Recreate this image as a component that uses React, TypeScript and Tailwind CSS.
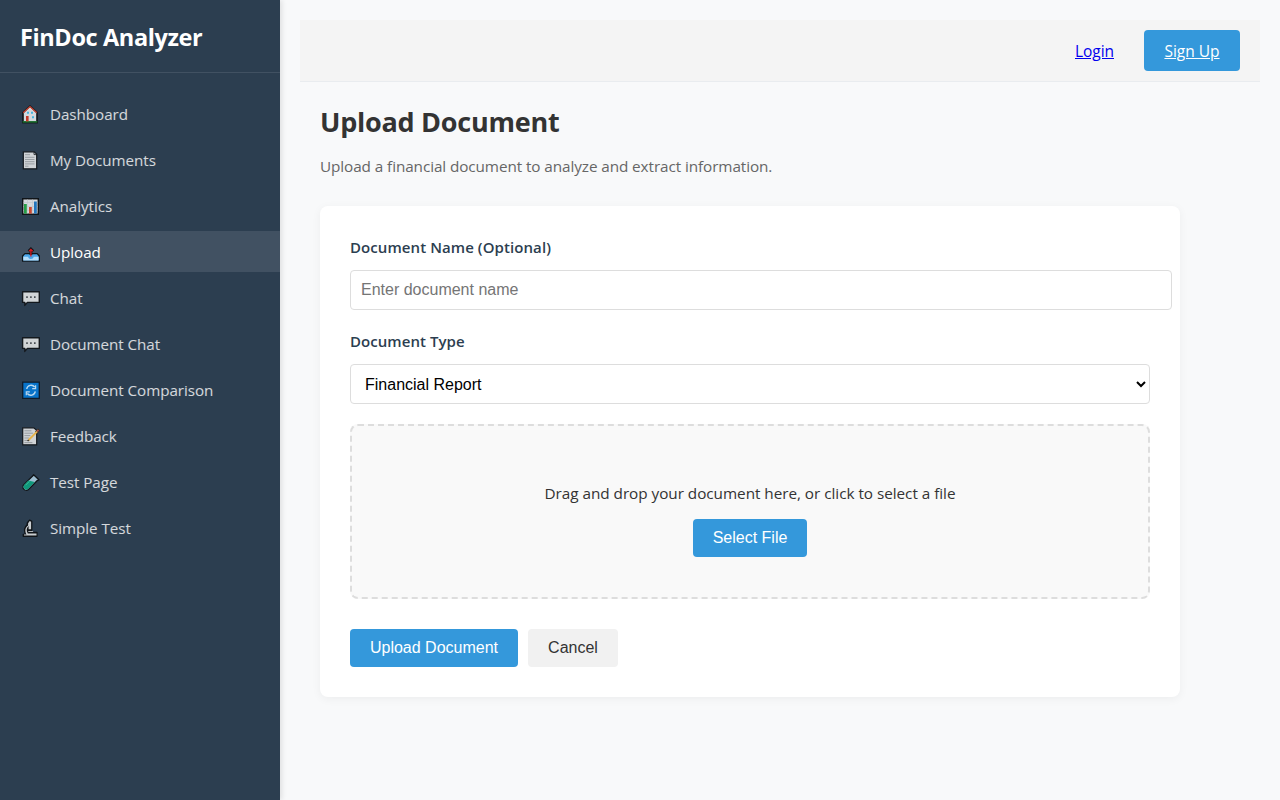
import type { ReactNode } from "react";

const icons: Record<string, ReactNode> = {
  home: (
    <>
      <path d="M10 3 17 9.6V19.5H3V9.6Z" fill="#d5d9dd" stroke="#101418" strokeWidth="1.6" />
      <path d="M3.2 9.8 10 3.6l6.8 6.2" fill="none" stroke="#c8402e" strokeWidth="1.2" />
      <path d="M2 19.2h16" stroke="#101418" strokeWidth="2" />
      <path d="M2.6 18.9h14.8" stroke="#239b3b" strokeWidth="1.1" />
      <path d="M7 8.7h2v2H7zm4 0h2v2h-2zm1 4.6h2v2h-2z" fill="#45b5de" />
      <path d="M6 13h2.6v5.4H6z" fill="#c43a2b" />
    </>
  ),
  page: (
    <>
      <path d="M3.3 2.8h11l2.4 2.4v14.6H3.3Z" fill="#d0d3d6" stroke="#13181d" strokeWidth="1.2" />
      <path d="M14 3v2.6h2.6" fill="none" stroke="#13181d" strokeWidth=".8" />
      <path d="M5 5.7h5M5 8.3h9.5M5 10.5h9.5M5 12.7h9.5M5 14.9h9.5M5 17.2h3.5" stroke="#92979c" strokeWidth=".9" />
    </>
  ),
  chart: (
    <>
      <path d="M2.7 3.7h15.6v15.6H2.7z" fill="#d6d9dd" stroke="#101418" strokeWidth="1.4" />
      <path d="M3.4 7.5h14M3.4 11.5h14M3.4 15.5h14M7.5 4.4v14M12.5 4.4v14" stroke="#bfc5ca" strokeWidth=".6" />
      <path d="M4 9h2.8v9.6H4z" fill="#269d46" />
      <path d="M9 12h2.8v6.6H9z" fill="#ca4932" />
      <path d="M14 6.5h2.8v12.1H14z" fill="#2375bc" />
    </>
  ),
  upload: (
    <>
      <path d="M4.8 12.6h12.4l2.1 2.4v5.2H2.6V15Z" fill="#4aa5e9" stroke="#101418" strokeWidth="1.3" strokeLinejoin="round" />
      <path d="M3.3 15.8h4.8c.3 1.5 1.3 2.2 2.8 2.2s2.5-.7 2.8-2.2h4.9v3.8H3.3Z" fill="#b4dcf8" />
      <path d="M10.9 14V8.6M8.6 10.2l2.3-2.3 2.3 2.3" fill="none" stroke="#101418" strokeWidth="2.8" />
      <path d="M10.9 15.6V8.6M9.1 10.2l1.8-1.8 1.8 1.8" fill="none" stroke="#d91920" strokeWidth="1.3" />
    </>
  ),
  chat: (
    <>
      <path d="M2.6 4.7h16.7v10.7H7.4l-2.6 3v-3H2.6Z" fill="#d1d4d6" stroke="#13181d" strokeWidth="1.4" strokeLinejoin="round" />
      <path d="M6.2 9.3h1.6v1.6H6.2zm3.9 0h1.6v1.6h-1.6zm3.9 0h1.6v1.6H14z" fill="#464b50" />
    </>
  ),
  refresh: (
    <>
      <path d="M2.7 3.2h16.6v16.1H2.7z" fill="#0873c9" stroke="#101c2a" strokeWidth="1.3" />
      <path d="M6.7 10a4.5 4.5 0 0 1 8-2M15.3 12.4a4.5 4.5 0 0 1-8 2.1" fill="none" stroke="#b9d8ef" strokeWidth="1.4" />
      <path d="M15.6 6.2v3.5h-3.4M6.3 16.3v-3.5h3.5" fill="none" stroke="#b9d8ef" strokeWidth="1.2" />
    </>
  ),
  memo: (
    <>
      <path d="M2.7 2.8h11l3 2.4v14.6h-14Z" fill="#d0d3d6" stroke="#13181d" strokeWidth="1.2" />
      <path d="M4.4 5.8h7M4.4 8.2h8.5M4.4 10.6h6M4.4 13h4.5M4.4 15.4h4M4.4 17.6h8" stroke="#8f9499" strokeWidth=".9" />
      <path d="m16 7.6 3.2-3.1" stroke="#34312a" strokeWidth="3" />
      <path d="m7.6 15.9 1.6-1.5" stroke="#34312a" strokeWidth="1.4" />
      <path d="m8.6 15 8.4-8.4" stroke="#e5b14b" strokeWidth="1.9" />
      <path d="m17.1 6.4 1.3-1.3" stroke="#b9534b" strokeWidth="1.7" />
    </>
  ),
  tube: (
    <>
      <path d="m13.6 3.7 5.3 5.1-1.6.7-8.6 8.8a3.3 3.3 0 0 1-4.9-4.7l9.1-8.8Z" fill="#9dbdd0" stroke="#101418" strokeWidth="1.3" strokeLinejoin="round" />
      <path d="m8.3 9.6 6.4 1.5-6.4 6.6a2.5 2.5 0 0 1-3.9-3.9Z" fill="#10987b" />
      <path d="m5.6 14.2 3.8-3.8" stroke="#39bd97" />
    </>
  ),
  microscope: (
    <>
      <path d="M7.2 5.8 9.7 3l2.1 1.2v8.3l-1 2.8H17v4H3.2v-2h2.2c-1.7-4.2-.6-7.5 1.8-9.5Z" fill="#101418" stroke="#101418" strokeWidth="1.2" strokeLinejoin="round" />
      <path d="M8.1 6.2 9.7 4l1.4.8v7.4H8.6V9c-2 1.8-2.6 4.4-.8 7.5h8.7v2H4v-1h2.5c-2-3.7-1.3-7 1.6-9Z" fill="#c9cdd0" />
      <path d="M8.3 14h4.8v1H8.3z" fill="#aeb4b8" />
    </>
  ),
};

const items = [
  { label: "Dashboard", icon: "home" },
  { label: "My Documents", icon: "page" },
  { label: "Analytics", icon: "chart" },
  { label: "Upload", icon: "upload" },
  { label: "Chat", icon: "chat" },
  { label: "Document Chat", icon: "chat" },
  { label: "Document Comparison", icon: "refresh" },
  { label: "Feedback", icon: "memo" },
  { label: "Test Page", icon: "tube" },
  { label: "Simple Test", icon: "microscope" },
];

function Sidebar() {
  return (
    <aside className="z-10 w-[280px] shrink-0 bg-[#2c3e50] text-white shadow-[2px_0_5px_rgba(0,0,0,0.1)]">
      <div className="h-[73px] border-b border-white/10 px-5 pt-[19px]">
        <h1 className="text-[23.5px] leading-9 font-bold tracking-[-0.38px] whitespace-nowrap">FinDoc Analyzer</h1>
      </div>
      <nav className="flex flex-col gap-[5px] pt-5">
        {items.map((item) => (
          <a
            key={item.label}
            className={
              item.label === "Upload"
                ? "flex h-[41px] items-center bg-white/10 px-5 text-white"
                : "flex h-[41px] items-center px-5 text-white/80"
            }
          >
            <svg viewBox="0 0 20 21" className="mr-2.5 h-[21px] w-5 shrink-0 overflow-visible">
              {icons[item.icon]}
            </svg>
            <span className="pt-0.5 text-[15.2px] font-medium tracking-[-0.05px] whitespace-nowrap">{item.label}</span>
          </a>
        ))}
      </nav>
    </aside>
  );
}

export default function App() {
  return (
    <div className="flex h-screen overflow-hidden bg-[#f8f9fa] font-['Open_Sans','Noto_Sans',sans-serif] text-[#333]">
      <Sidebar />
      <main className="min-w-0 flex-1 p-5">
        <header className="flex h-[62px] items-center justify-end border-b border-[#e9ecef] bg-[#f4f4f4] px-5 text-[15.5px]">
          <a className="mr-[30px] pt-0.5 tracking-[-0.05px] text-[#0000ee] underline">Login</a>
          <a className="flex h-[41px] w-24 items-center justify-center rounded bg-[#3498db] pt-0.5 text-white underline">
            Sign Up
          </a>
        </header>
        <section className="w-[900px] px-5 pt-5">
          <h2 className="text-[27px] leading-10 font-bold tracking-[-0.25px]">Upload Document</h2>
          <p className="mt-3 text-[15.3px] leading-6 tracking-[-0.09px] text-[#666]">
            Upload a financial document to analyze and extract information.
          </p>
          <form className="mt-7 h-[491px] rounded-lg bg-white p-[30px] shadow-[0_2px_10px_rgba(0,0,0,0.05)]">
            <label className="block text-[15px] leading-[22px] font-semibold tracking-[0.08px] text-[#2c3e50]">
              Document Name (Optional)
            </label>
            <input
              placeholder="Enter document name"
              className="mt-3 block h-10 w-[822px] rounded border border-[#ddd] px-2.5 font-['Liberation_Sans',Arial,sans-serif] text-base placeholder:text-[#757575]"
            />
            <label className="mt-5 block text-[15px] leading-[22px] font-semibold tracking-[0.05px] text-[#2c3e50]">
              Document Type
            </label>
            <select className="mt-3 block h-10 w-full rounded border border-[#ddd] bg-white px-2.5 font-['Liberation_Sans',Arial,sans-serif] text-base text-black">
              <option>Financial Report</option>
            </select>
            <div className="mt-5 flex h-[175px] flex-col items-center rounded-lg border-2 border-dashed border-[#ddd] bg-[#f9f9f9] pt-[55px]">
              <p className="text-[15.3px] leading-6 tracking-[-0.035px] whitespace-nowrap">
                Drag and drop your document here, or click to select a file
              </p>
              <button
                type="button"
                className="mt-3.5 h-[38px] w-[114px] rounded bg-[#3498db] font-['Liberation_Sans',Arial,sans-serif] text-base text-white"
              >
                Select File
              </button>
            </div>
            <div className="mt-[30px] flex gap-2.5 font-['Liberation_Sans',Arial,sans-serif] text-base">
              <button type="button" className="h-[38px] w-[168px] rounded bg-[#3498db] text-white">
                Upload Document
              </button>
              <button type="button" className="h-[38px] w-[90px] rounded bg-[#f1f1f1] text-[#333]">
                Cancel
              </button>
            </div>
          </form>
        </section>
      </main>
    </div>
  );
}
